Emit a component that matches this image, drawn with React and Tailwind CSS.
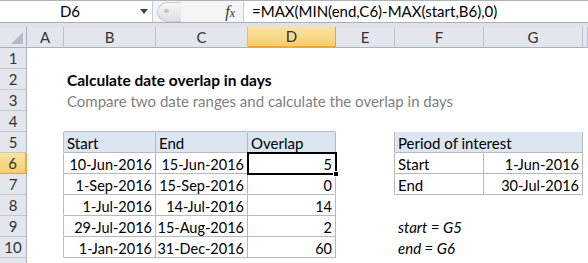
import React from "react";

const COLS = [
  { k: "A", w: "w-[37px]" },
  { k: "B", w: "w-[92px]" },
  { k: "C", w: "w-[92px]" },
  { k: "D", w: "w-[88px]" },
  { k: "E", w: "w-[59px]" },
  { k: "F", w: "w-[89px]" },
  { k: "G", w: "w-[99px]" },
  { k: "H", w: "flex-1" },
];

const N = "text-[14.5px] text-black";

const rows = {
  2: { B: { t: "Calculate date overlap in days", cls: "font-bold text-[15.5px] text-black", over: true } },
  3: { B: { t: "Compare two date ranges and calculate the overlap in days", cls: "text-[15px] text-[#7f7f7f]", over: true } },
  4: { B: { bb: true }, C: { bb: true }, D: { bb: true } },
  5: {
    A: { br: true },
    B: { t: "Start", b: true, fill: true },
    C: { t: "End", b: true, fill: true },
    D: { t: "Overlap", b: true, fill: true },
    E: { br: true },
    F: { t: "Period of interest", bb: true, fill: true, over: true },
    G: { b: true, fill: true },
  },
  6: {
    A: { br: true },
    B: { t: "10-Jun-2016", a: "r", b: true, cls: N },
    C: { t: "15-Jun-2016", a: "r", b: true, cls: N },
    D: { t: "5", a: "r", b: true, sel: true, cls: N },
    E: { br: true },
    F: { t: "Start", b: true },
    G: { t: "1-Jun-2016", a: "r", b: true, cls: N },
  },
  7: {
    A: { br: true },
    B: { t: "1-Sep-2016", a: "r", b: true, cls: N },
    C: { t: "15-Sep-2016", a: "r", b: true, cls: N },
    D: { t: "0", a: "r", b: true, cls: N },
    E: { br: true },
    F: { t: "End", b: true },
    G: { t: "30-Jul-2016", a: "r", b: true, cls: N },
  },
  8: {
    A: { br: true },
    B: { t: "1-Jul-2016", a: "r", b: true, cls: N },
    C: { t: "14-Jul-2016", a: "r", b: true, cls: N },
    D: { t: "14", a: "r", b: true, cls: N },
  },
  9: {
    A: { br: true },
    B: { t: "29-Jul-2016", a: "r", b: true, cls: N },
    C: { t: "15-Aug-2016", a: "r", b: true, cls: N },
    D: { t: "2", a: "r", b: true, cls: N },
    F: { t: "start = G5", cls: "italic text-[15px] text-black", over: true },
  },
  10: {
    A: { br: true },
    B: { t: "1-Jan-2016", a: "r", b: true, cls: N },
    C: { t: "31-Dec-2016", a: "r", b: true, cls: N },
    D: { t: "60", a: "r", b: true, cls: N },
    F: { t: "end = G6", cls: "italic text-[15px] text-black", over: true },
  },
};

function Cell({ col, spec }) {
  const s = spec || {};
  const br = s.b || s.br ? "border-r-[#b9b9b9]" : "border-r-transparent";
  const bb = s.b || s.bb ? "border-b-[#b9b9b9]" : "border-b-transparent";
  const fill = s.fill ? "bg-[#dce6f1]" : "bg-white";
  const align = s.a === "r" ? "justify-end pr-[3px]" : "justify-start pl-[3px]";
  const z = s.sel ? "overflow-visible z-30" : s.over ? "overflow-visible z-10" : "overflow-hidden";
  return (
    <div
      className={`${col.w} relative h-[21px] shrink-0 border-r border-b ${br} ${bb} ${fill} flex items-end ${align} pb-[1px] leading-none ${z}`}
    >
      {s.t && (
        <span className={`whitespace-nowrap ${s.cls || "text-[15px] text-black"}`}>{s.t}</span>
      )}
      {s.sel && (
        <div className="absolute left-[-1px] top-[-1px] w-[90px] h-[23px] border-2 border-black">
          <div className="absolute right-[-4px] bottom-[-4px] w-[6px] h-[6px] bg-black border border-white" />
        </div>
      )}
    </div>
  );
}

export default function App() {
  const font = { fontFamily: "Lato, 'Open Sans', sans-serif" };
  return (
    <div className="w-[588px] h-[263px] overflow-hidden bg-white text-black" style={font}>
      {/* formula bar */}
      <div className="flex h-[22px] border-t border-t-[#aeb3b9] bg-white">
        <div className="w-[153px] shrink-0 relative flex items-center justify-center border-r border-[#c6cbd2]">
          <span className="text-[15px] mr-[12px]">D6</span>
          <svg className="absolute right-[4px] top-[8px]" width="8" height="5" viewBox="0 0 8 5">
            <path d="M0 0 H8 L4 5 Z" fill="#444" />
          </svg>
        </div>
        <div className="w-[90px] shrink-0 flex items-center bg-[#f4f5f7] relative">
          <div className="ml-[4px] h-[20px] w-[24px] rounded-l-full border border-r-0 border-[#c6cbd2] bg-gradient-to-b from-[#f6f7f8] to-[#dde0e4] relative">
            <div className="absolute left-[6px] top-[6px] w-[5px] h-[4px] rounded-full bg-[#c4c8ce]" />
          </div>
          <span
            className="ml-auto mr-[8px] italic text-[16px] text-[#333]"
            style={{ fontFamily: "'Liberation Serif', serif" }}
          >
            f<span className="text-[12px]">x</span>
          </span>
        </div>
        <div className="flex-1 flex items-center pl-[8px] border-l border-[#c6cbd2]">
          <span className="text-[15px] whitespace-nowrap">=MAX(MIN(end,C6)-MAX(start,B6),0)</span>
        </div>
      </div>
      {/* band */}
      <div className="h-[5px] bg-[#dfe2e6] border-t border-[#aab0b8]" />
      {/* column headers */}
      <div className="flex h-[21px]">
        <div className="w-[27px] shrink-0 border-r border-b border-[#a9b1bb] bg-[#e3e7ed] relative">
          <svg className="absolute right-[3px] bottom-[3px]" width="12" height="12" viewBox="0 0 12 12">
            <path d="M12 0 V12 H0 Z" fill="#b5bcc5" />
          </svg>
        </div>
        {COLS.map((c) =>
          c.k === "D" ? (
            <div
              key={c.k}
              className={`${c.w} shrink-0 flex items-center justify-center text-[15px] text-[#333] border-r border-[#e1a640] border-b-2 border-b-[#f0a83a] bg-gradient-to-b from-[#fbe3a3] to-[#f6cd6d]`}
            >
              {c.k}
            </div>
          ) : (
            <div
              key={c.k}
              className={`${c.w} shrink-0 flex items-center justify-center text-[15px] text-[#333] border-r border-r-[#bcc3cc] border-b border-b-[#a9b1bb] bg-[#e3e7ed]`}
            >
              {c.k === "H" ? "" : c.k}
            </div>
          )
        )}
      </div>
      {/* body rows */}
      {Array.from({ length: 11 }, (_, i) => i + 1).map((r) => (
        <div key={r} className="flex h-[21px]">
          <div
            className={`w-[27px] shrink-0 h-[21px] flex items-center justify-center text-[15px] border-r border-b ${
              r === 6
                ? "bg-gradient-to-b from-[#fbe3a3] to-[#f6cd6d] border-r-2 border-r-[#f0a83a] border-b-[#e1a640] text-[#333]"
                : "bg-[#e3e7ed] border-r-[#a9b1bb] border-b-[#c3c9d1] text-[#333]"
            }`}
          >
            {r}
          </div>
          {COLS.map((c) => (
            <Cell key={c.k} col={c} spec={(rows[r] || {})[c.k]} />
          ))}
        </div>
      ))}
    </div>
  );
}
